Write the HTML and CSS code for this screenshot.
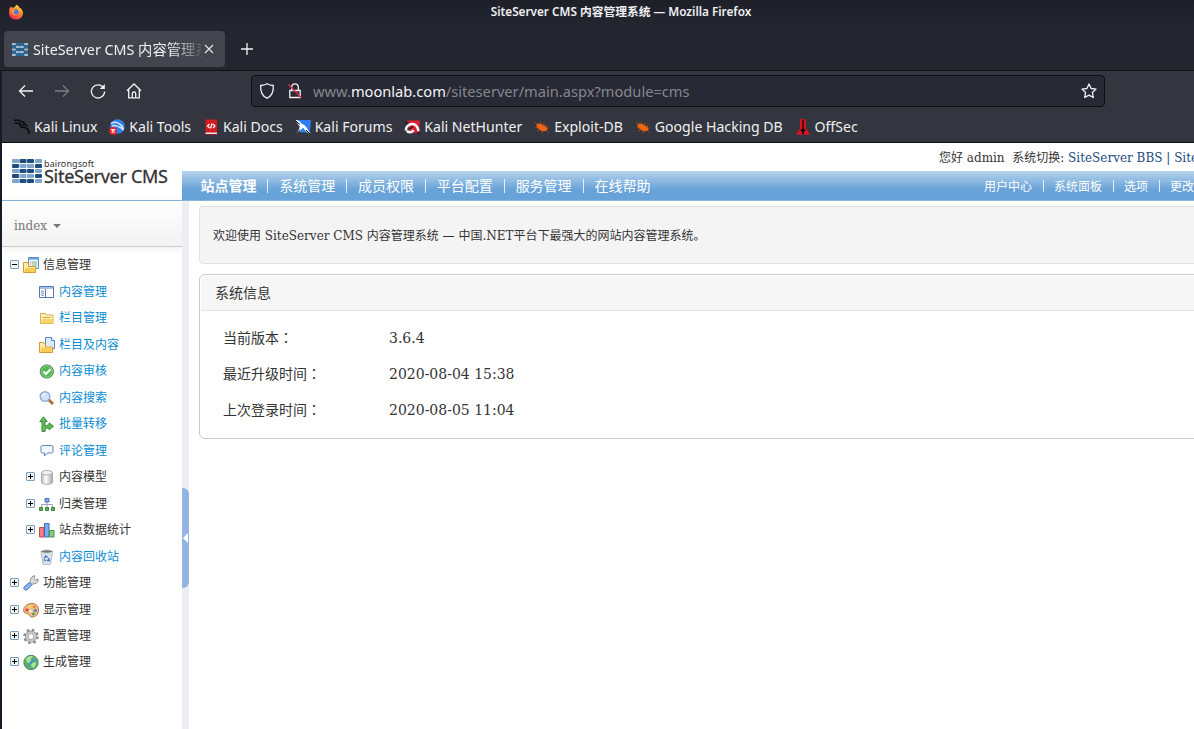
FILE: index.html
```html
<!DOCTYPE html>
<html lang="zh-CN">
<head>
  <meta charset="UTF-8" />
  <title>SiteServer CMS 内容管理系统</title>
  <link rel="stylesheet" href="styles.css">
</head>
<body>
  <div class="titlebar">
    <svg class="firefox" width="16" height="16" viewBox="0 0 16 16">
      <defs>
        <linearGradient id="fox" x1="0.8" y1="0" x2="0.3" y2="1">
          <stop offset="0" stop-color="#ffe14a"/><stop offset="0.45" stop-color="#ff8a2b"/><stop offset="1" stop-color="#f5245a"/>
        </linearGradient>
      </defs>
      <path d="M1.6 4.2 3 2.6l.8 1.2L6 3.6C7 2.8 8 2 8.200.8c1.600.4 2.600 1.400 3 2.600C13 4 15 6.200 15 9a7 6.600 0 0 1-14 0c0-1.800.2-3.200.6-4.800z" fill="url(#fox)"/>
      <circle cx="7.600" cy="8.200" r="3" fill="#4a74e8"/>
      <path d="M3.500 6.200c1.500-.6 3-.4 4 .6L5.500 8.300c0 2 2.500 2.500 4.500 1-.6 2.500-5.500 2.600-6.300-.2z" fill="#ff9a2e"/>
    </svg>
    <div class="window-title">SiteServer CMS 内容管理系统 — Mozilla Firefox</div>
  </div>

  <div class="tabs">
    <div class="tab">
      <svg width="16" height="13" viewBox="0 0 30 24">
        <path fill="#9dbfdf" d="M0 0h7v4H0zM23 0h7v4h-7zM7.500 5h7v4h-7zM15 5h7v4h-7zM0 10h7v4H0zM23 10h7v4h-7zM7.500 15h7v4h-7zM15 15h7v4h-7zM0 20h7v4H0zM23 20h7v4h-7z"/>
        <path fill="#1f6ca3" d="M7.500 0h7v4h-7zM15 0h7v4h-7zM0 5h7v4H0zM23 5h7v4h-7zM7.500 10h7v4h-7zM15 10h7v4h-7zM0 15h7v4H0zM23 15h7v4h-7zM7.500 20h7v4h-7zM15 20h7v4h-7z"/>
      </svg>
      <span class="tab-title">SiteServer CMS 内容管理系统</span>
      <svg class="close" width="10" height="10" viewBox="0 0 10 10"><path d="M1 1l8 8M9 1L1 9" stroke="#e6e6ea" stroke-width="1.1"/></svg>
    </div>
    <svg class="plus" width="14" height="14" viewBox="0 0 14 14"><path d="M7 1v12M1 7h12" stroke="#f2f2f4" stroke-width="1.3"/></svg>
  </div>

  <div class="window">
    <div class="toolbar">
      <div class="nav-buttons">
        <svg width="16" height="16" viewBox="0 0 16 16" class="stroke"><path d="M15 8H1.500M7 2.500 1.500 8 7 13.500"/></svg>
        <svg width="16" height="16" viewBox="0 0 16 16" class="stroke off"><path d="M1 8h13.500M9 2.500 14.500 8 9 13.500"/></svg>
        <svg width="16" height="16" viewBox="0 0 16 16" class="stroke"><path d="M13.500 4.800A6.600 6.600 0 1 0 14.600 8.500"/><path d="M14.800 1v5H9.800z" fill="#f2f2f4" stroke="none"/></svg>
        <svg width="16" height="16" viewBox="0 0 16 16" class="stroke"><path d="M1 7.800 8 1l7 6.800M2.700 6.500v8.300h10.600V6.500M6.300 14.800V10.500c0-2 3.400-2 3.400 0v4.300"/></svg>
      </div>
      <div class="urlbar">
        <svg width="16" height="16" viewBox="0 0 16 16" class="stroke"><path d="M8 .8c1.700 1 3.800 1.600 6.300 1.700C14.700 9 13 13 8 15.200 3 13 1.300 9 1.700 2.500 4.200 2.400 6.300 1.800 8 .8z"/></svg>
        <svg width="16" height="16" viewBox="0 0 16 16" class="stroke lock"><path d="M4.700 7V4.200a3.300 3.300 0 0 1 6.600 0V7M2.800 7.500h10.400v7H2.800z"/><path d="M1.500 1.500l13 13.500" stroke="#e22850" stroke-width="1.500"/></svg>
        <span class="url">www.<b>moonlab.com</b>/siteserver/main.aspx?module=cms</span>
        <svg width="16" height="16" viewBox="0 0 16 16" class="stroke star"><path d="M8 1l2.100 4.500 4.900.6-3.600 3.400.9 5L8 12.100l-4.300 2.400.9-5L1 6.100l4.900-.6z" stroke-linejoin="round"/></svg>
      </div>
    </div>

    <div class="bookmarks">
      <div class="bookmark">
        <svg width="16" height="16" viewBox="0 0 16 16"><path d="M0 1.500c3-1 5-.5 7 1 2 0 3 .8 4 2.200M1 4.500c3-.8 5-.2 6 1M5.500 4c0 3 2 4.500 5 4.600 2.500.3 4.400 2.500 4.800 6.400M8 5.500c2 0 4 0 5.500 1.500" fill="none" stroke="#08090b" stroke-width="1.500"/></svg>
        <span>Kali Linux</span>
      </div>
      <div class="bookmark">
        <svg width="16" height="16" viewBox="0 0 16 16"><circle cx="8.500" cy="7.500" r="7.300" fill="#2f7fee"/><path d="M2 4.500c4-2 7-1.500 9 1 2 .8 3 3 3.300 5.500C13 9 11 8 9 7.500M3 7c2-1 4-.5 5.500.5" fill="none" stroke="#d7e9ff" stroke-width="1.500"/><circle cx="4" cy="12" r="4" fill="#e4252c"/><path d="M2 10.500h4.200M3.300 10.500V14M5 10.500V14" stroke="#fff" fill="none"/></svg>
        <span>Kali Tools</span>
      </div>
      <div class="bookmark">
        <svg width="16" height="16" viewBox="0 0 16 16"><path d="M2.500.5H14v15H2.500z" fill="#d51920"/><path d="M2.500 13.500H14V15H2.500z" fill="#e9e3e3"/><path d="M6.500 5 4.500 7l2 2M10 5l2 2-2 2M9 4.500 7.500 9.500" stroke="#fff" fill="none" stroke-width="1.200"/></svg>
        <span>Kali Docs</span>
      </div>
      <div class="bookmark">
        <svg width="16" height="16" viewBox="0 0 16 16"><path d="M3 1h13l-1 12.500H5z" fill="#2c7ef0"/><path d="M0 1c4 0 5 2 7 4 4 1 5 5 9 10.500-3.500-1.500-6-4-8-7C6.500 11 4 12.500 1 14.500c2-3 3.500-5 4-7C2.500 5.500 2 3 0 1z" fill="#fff"/><path d="M0 1.500l5 4M11 11l4.500 4.500M1 14.500l4-4" stroke="#111" fill="none"/></svg>
        <span>Kali Forums</span>
      </div>
      <div class="bookmark">
        <svg width="16" height="16" viewBox="0 0 16 16"><path d="M3 1.500h13L15 14H6z" fill="#dd2234"/><path d="M2 11.500C1.500 7 6 4.500 9.500 5.200c3 .6 4.300 3 5 6.800" fill="none" stroke="#fff" stroke-width="2.400"/><path d="M3 11.500c1 2.500 5 2.500 6.500-.5" fill="none" stroke="#fff" stroke-width="2.400"/><path d="M1.200 4l3.500-.5M5.500 10 9 7.500M13 13.500l2.500 1.500" stroke="#191114" fill="none" stroke-width="1.200"/></svg>
        <span>Kali NetHunter</span>
      </div>
      <div class="bookmark bug">
        <svg width="16" height="16" viewBox="0 0 16 16"><path d="M2.500 5.500C4 3.500 7 4.500 10 6.500c2.500 1.200 4 3.200 3 4.800-2 1.700-5.500 1.200-8-1C3 9 2 7 2.500 5.500z" fill="#ef6511"/><path d="M1 3l2.500 2.500M6.500 2.500 7 5M10 3.500l0 3M13 5.500l-1 2.500M1.500 9l3-1M3 12.500l3-2M8 14.500V11M15 8.500l-2 1M15 13.500l-2-2" stroke="#b94e14" fill="none" stroke-width=".8"/></svg>
        <span>Exploit-DB</span>
      </div>
      <div class="bookmark bug">
        <svg width="16" height="16" viewBox="0 0 16 16"><path d="M2.500 5.500C4 3.500 7 4.500 10 6.500c2.500 1.200 4 3.200 3 4.800-2 1.700-5.500 1.200-8-1C3 9 2 7 2.500 5.500z" fill="#ef6511"/><path d="M1 3l2.500 2.500M6.500 2.500 7 5M10 3.500l0 3M13 5.500l-1 2.500M1.500 9l3-1M3 12.500l3-2M8 14.500V11M15 8.500l-2 1M15 13.500l-2-2" stroke="#b94e14" fill="none" stroke-width=".8"/></svg>
        <span>Google Hacking DB</span>
      </div>
      <div class="bookmark">
        <svg width="16" height="16" viewBox="0 0 16 16"><path d="M5 .3h6v9l4 6.400H1l4-6.400z" fill="#d8161f"/><path d="M7.300 1h1.400v8l2 2.500-1.700 1v2.500H7v-2.500l-1.700-1 2-2.500z" fill="#22090b"/></svg>
        <span>OffSec</span>
      </div>
    </div>

    <div class="page">
      <div class="header">
        <div class="logo">
          <svg width="30" height="25" viewBox="0 0 30 25">
            <g fill="#82a6cb"><rect x="0" y="0" width="7" height="4" rx="1"/><rect x="23" y="0" width="7" height="4" rx="1"/><rect x="7.500" y="5" width="7" height="4" rx="1"/><rect x="15" y="5" width="7" height="4" rx="1"/><rect x="0" y="10" width="7" height="4" rx="1"/><rect x="23" y="10" width="7" height="4" rx="1"/><rect x="7.500" y="15" width="7" height="4" rx="1"/><rect x="15" y="15" width="7" height="4" rx="1"/><rect x="0" y="20" width="7" height="4" rx="1"/><rect x="23" y="20" width="7" height="4" rx="1"/></g>
            <g fill="#1d4d7d"><rect x="7.500" y="0" width="7" height="4" rx="1"/><rect x="15" y="0" width="7" height="4" rx="1"/><rect x="0" y="5" width="7" height="4" rx="1"/><rect x="23" y="5" width="7" height="4" rx="1"/><rect x="7.500" y="10" width="7" height="4" rx="1"/><rect x="15" y="10" width="7" height="4" rx="1"/><rect x="0" y="15" width="7" height="4" rx="1"/><rect x="23" y="15" width="7" height="4" rx="1"/><rect x="7.500" y="20" width="7" height="4" rx="1"/><rect x="15" y="20" width="7" height="4" rx="1"/></g>
          </svg>
          <div class="logo-text">
            <span class="company">bairongsoft</span>
            <span class="product">SiteServer CMS</span>
          </div>
        </div>
        <div class="header-main">
          <div class="greeting">您好 admin&nbsp; 系统切换: <a>SiteServer BBS</a> <a>|</a> <a>SiteServer WCM</a></div>
          <div class="navbar">
            <ul class="menu">
              <li class="active">站点管理</li>
              <li>系统管理</li>
              <li>成员权限</li>
              <li>平台配置</li>
              <li>服务管理</li>
              <li>在线帮助</li>
            </ul>
            <ul class="menu user-menu">
              <li>用户中心</li>
              <li>系统面板</li>
              <li>选项</li>
              <li>更改密码</li>
            </ul>
          </div>
        </div>
      </div>

      <div class="main">
        <div class="sidebar">
          <div class="site-select">index <i class="caret"></i></div>
          <ul class="tree">
            <li>
              <i class="toggle minus"></i>
              <svg width="16" height="16" viewBox="0 0 16 16"><path d="M5.500.5h10v11h-10z" fill="#e9f3fd" stroke="#5b8fcf"/><path d="M5 1h11v1.500H5z" fill="#5d9ae0"/><path d="M7 5h1M7 7h1" stroke="#d79a3c"/><path d="M9 5h5M9 7h5M9 9h5" stroke="#86b886"/><path d="M.5 5.500h4l1 1.500v2.500h7v6H.5z" fill="#fdebb0" stroke="#d39b32"/><path d="M2.500 11h10l-.5 4H1z" fill="#f6cd55"/></svg>
              信息管理
            </li>
            <li class="child link">
              <svg width="16" height="16" viewBox="0 0 16 16"><path d="M.5 2.500h14v11H.5z" fill="#fff" stroke="#5478b4"/><path d="M1 3h13v2H1z" fill="#a8c1e8"/><path d="M6.500 5v8" stroke="#5478b4"/><path d="M3 6v6M3 7.500h2M3 9.500h2M3 11.500h2" stroke="#8fa2bb"/></svg>
              内容管理
            </li>
            <li class="child link">
              <svg width="16" height="16" viewBox="0 0 16 16"><path d="M1.500 3.500h5l1 1.500h6.500v8.500H1.500z" fill="#fdf0bd" stroke="#dfab4a"/><path d="M4 7.500h10v6H2z" fill="#f8d467"/><path d="M3.500 7.500h8" stroke="#d9a23a"/><path d="M3 8.500h10" stroke="#fff7d8"/></svg>
              栏目管理
            </li>
            <li class="child link">
              <svg width="16" height="16" viewBox="0 0 16 16"><path d="M6.500.5h6l3 3v8h-9z" fill="#dcebfb" stroke="#5b87c4"/><path d="M12.500.5v3h3" fill="#fff" stroke="#5b87c4"/><path d="M.5 5.500h4l1 1.500h1v3h7v5.500H.5z" fill="#fdebb0" stroke="#d39b32"/><path d="M2.500 10.500h10.800l-1 4.500H1z" fill="#f6cd55"/></svg>
              栏目及内容
            </li>
            <li class="child link">
              <svg width="16" height="16" viewBox="0 0 16 16"><circle cx="7.800" cy="8.500" r="6.600" fill="#58b558" stroke="#3f8a42"/><circle cx="7.800" cy="8.500" r="5.600" fill="none" stroke="#9ddb9a" stroke-width=".8"/><path d="M4.500 8.500 7 11l4.500-4.800" fill="none" stroke="#fff" stroke-width="2"/></svg>
              内容审核
            </li>
            <li class="child link">
              <svg width="16" height="16" viewBox="0 0 16 16"><path d="M9.500 9.500l4.500 4.500" stroke="#a8713c" stroke-width="3"/><circle cx="6" cy="6.500" r="4.800" fill="#cfe3fa" stroke="#91add6" stroke-width="1.400"/><path d="M3.500 6c.3-1.500 1.200-2.300 2.800-2.300" fill="none" stroke="#fff"/></svg>
              内容搜索
            </li>
            <li class="child link">
              <svg width="16" height="16" viewBox="0 0 16 16"><path d="M3 15.500V5.500H.8L4.500.8l3.700 4.700H6v5c.8-1 2-1.500 4-1.500V6.800l4.500 3.500-4.500 3.500v-2c-2.500 0-4 1-4 3.700z" fill="#62bd57" stroke="#3b8a3b"/></svg>
              批量转移
            </li>
            <li class="child link">
              <svg width="16" height="16" viewBox="0 0 16 16"><path d="M3.500 2.500h9a1.500 1.500 0 0 1 1.500 1.500v4.500a1.500 1.500 0 0 1-1.500 1.500H8.500L5.500 13v-3h-2A1.500 1.500 0 0 1 2 8.500V4a1.500 1.500 0 0 1 1.500-1.500z" fill="#f2f7fd" stroke="#5d86bb"/></svg>
              评论管理
            </li>
            <li class="sub">
              <i class="toggle"></i>
              <svg width="16" height="16" viewBox="0 0 16 16"><defs><linearGradient id="cyl"><stop offset="0" stop-color="#bbb"/><stop offset=".4" stop-color="#fff"/><stop offset="1" stop-color="#aaa"/></linearGradient></defs><path d="M2.500 3.500v9.500c0 3 11 3 11 0V3.500z" fill="url(#cyl)" stroke="#a7a7a7"/><ellipse cx="8" cy="3.700" rx="5.500" ry="2.200" fill="#f0f0f0" stroke="#b0b0b0"/></svg>
              内容模型
            </li>
            <li class="sub">
              <i class="toggle"></i>
              <svg width="16" height="16" viewBox="0 0 16 16"><path d="M8 6v3M2.500 12V8.500h11V12M8 9v3" fill="none" stroke="#9aa6b6"/><path d="M6 2.500h4v3.500H6z" fill="#7da9e6" stroke="#4d74b2"/><path d="M.5 11.500h3v3h-3zM6.500 11.500h3v3h-3zM12.500 11.500h3v3h-3z" fill="#67b155" stroke="#3b8335"/></svg>
              归类管理
            </li>
            <li class="sub">
              <i class="toggle"></i>
              <svg width="16" height="16" viewBox="0 0 16 16"><path d="M.5 5.500h4.500v9.500H.5z" fill="#f08080" stroke="#c64747"/><path d="M5.500 1.500H10V15H5.500z" fill="#80abea" stroke="#396eba"/><path d="M10.500 8.500H15V15h-4.500z" fill="#8bc982" stroke="#49934a"/></svg>
              站点数据统计
            </li>
            <li class="child link">
              <svg width="16" height="16" viewBox="0 0 16 16"><path d="M2 2.500l2 12.500c2 1 5.500 1 7.500 0L13.500 2.500z" fill="#dfe4ea" stroke="#b2b9c2"/><ellipse cx="7.800" cy="2.500" rx="6" ry="1.700" fill="#6d7783" stroke="#dde1e6"/><path d="M5.200 9.500l1.500-2.500 2 1.500M9.500 9l.8 2.500H7.800M6.500 12l-1.500-1.500" fill="none" stroke="#376fc0" stroke-width="1.300"/></svg>
              内容回收站
            </li>
            <li>
              <i class="toggle"></i>
              <svg width="16" height="16" viewBox="0 0 16 16"><path d="M7.500 6.500c-.5-3 1.500-5.700 4.500-5.700L11 3.300l1.600 1.800L15 4c.8 3-2 5.400-5 4.600L8.800 9.800 6.500 7.500z" fill="#dcdcdc" stroke="#8d8d8d"/><path d="M6.600 7.200l2.500 2.500-5 5c-2 1.200-4-.6-3-2.700z" fill="#8fb3f0" stroke="#4c72b9"/></svg>
              功能管理
            </li>
            <li>
              <i class="toggle"></i>
              <svg width="16" height="16" viewBox="0 0 16 16"><path d="M.6 8.500C.6 4 5 1.500 9 1.500c4 0 6.500 2.500 6.500 6.500 0 4.500-3 7-6.500 7-2.500 0-2-2.500-4-3.200C3 11.500.8 11 .6 8.500z" fill="#efbd88" stroke="#b0753f"/><circle cx="4" cy="8" r="1.500" fill="#d93a32"/><circle cx="7" cy="4.800" r="1.400" fill="#f4d842"/><circle cx="11.300" cy="5" r="1.400" fill="#e6803a"/><circle cx="12.300" cy="8.500" r="1.500" fill="#3d82d6"/><circle cx="10.500" cy="12" r="1.400" fill="#4aa05a"/><circle cx="7.500" cy="9" r="1.200" fill="#fff"/></svg>
              显示管理
            </li>
            <li>
              <i class="toggle"></i>
              <svg width="16" height="16" viewBox="0 0 16 16"><circle cx="8" cy="8.500" r="6.500" fill="none" stroke="#8f8f8f" stroke-width="2.600" stroke-dasharray="2.550 2.555"/><circle cx="8" cy="8.500" r="4.200" fill="#fff" stroke="#8f8f8f" stroke-width="3.400"/><circle cx="8" cy="8.500" r="4.200" fill="none" stroke="#c8c8c8" stroke-width="2.200"/></svg>
              配置管理
            </li>
            <li>
              <i class="toggle"></i>
              <svg width="16" height="16" viewBox="0 0 16 16"><circle cx="8" cy="8.500" r="7.200" fill="#5fae69" stroke="#4b8d55"/><path d="M3 5c2-3 5-3.500 7-2.500L7.500 5.500 9 7 5.500 9 4 8zM8.500 9.500 12.500 8c1 2 0 4.500-2 6L8 12z" fill="#a6e49b"/><path d="M9 5c2 0 3 1 3 2.500L9.500 8 8 10.500 6 9.500zM4 10.500l2.500 1 .5 2.500c-1.500-.5-2.500-1.500-3-3.500z" fill="#4a92d8"/></svg>
              生成管理
            </li>
          </ul>
        </div>
        <div class="splitter"><div class="handle"></div></div>
        <div class="content">
          <div class="welcome">欢迎使用 SiteServer CMS 内容管理系统 — 中国.NET平台下最强大的网站内容管理系统。</div>
          <div class="panel">
            <div class="panel-title">系统信息</div>
            <dl class="info">
              <dt>当前版本<span class="colon" lang="zh-TW">：</span></dt><dd>3.6.4</dd>
              <dt>最近升级时间<span class="colon" lang="zh-TW">：</span></dt><dd>2020-08-04 15:38</dd>
              <dt>上次登录时间<span class="colon" lang="zh-TW">：</span></dt><dd>2020-08-05 11:04</dd>
            </dl>
          </div>
        </div>
      </div>
    </div>
  </div>
</body>
</html>
```
FILE: styles.css
```css
* { box-sizing: border-box; }
body {
  margin: 0;
  width: 1194px;
  height: 729px;
  overflow: hidden;
  display: flex;
  flex-direction: column;
  background: #23262f;
  color: #f0f0f2;
  font-family: "Noto Sans", "Noto Sans CJK SC", sans-serif;
  white-space: nowrap;
}
ul, dl, dd { margin: 0; padding: 0; list-style: none; }
svg { flex: none; display: block; }

/* browser window */
.titlebar {
  height: 25px;
  display: flex;
  align-items: center;
  background: linear-gradient(#1e1f29, #23262f);
}
.firefox { margin: 0 0 2px 8px; }
.window-title {
  flex: 1;
  padding: 0 0 3px 24px;
  text-align: center;
  font-size: 11.75px;
  font-weight: 600;
  line-height: 22px;
}
.tabs {
  height: 45px;
  padding: 6px 0 3px 4px;
  display: flex;
  align-items: center;
}
.tab {
  width: 221px;
  height: 36px;
  padding: 0 11px 0 8px;
  display: flex;
  align-items: center;
  background: #42454d;
  border-radius: 4px;
}
.tab-title {
  width: 168px;
  margin-left: 5px;
  padding-bottom: 2px;
  overflow: hidden;
  font-size: 14.3px;
  -webkit-mask-image: linear-gradient(to right, #000 138px, transparent 172px);
  mask-image: linear-gradient(to right, #000 138px, transparent 172px);
}
.close { margin-left: 3px; }
.plus { margin-left: 15px; }
.window {
  flex: 1;
  display: flex;
  flex-direction: column;
  border-left: 2px solid #171a27;
  border-top: 1px solid #101116;
  background: #33363e;
}
.toolbar {
  height: 41px;
  display: flex;
  align-items: center;
  padding: 0 0 1px 16px;
}
.nav-buttons {
  width: 233px;
  display: flex;
  gap: 20px;
}
.stroke {
  fill: none;
  stroke: #f2f2f4;
  stroke-width: 1.3;
}
.off { stroke: #7b7d83; }
.urlbar {
  width: 854px;
  height: 32px;
  padding: 0 7px;
  display: flex;
  align-items: center;
  background: #272934;
  border: 1px solid #0e0f13;
  border-radius: 4px;
}
.lock { margin-left: 12px; }
.url {
  margin-left: 10px;
  flex: 1;
  color: #85878e;
  font-size: 14.65px;
}
.url b { font-weight: normal; color: #f5f5f7; }
.bookmarks {
  height: 31px;
  padding: 0 0 1px 12px;
  display: flex;
  align-items: center;
  gap: 11.8px;
  border-bottom: 1px solid #0e0f13;
  font-size: 14.1px;
}
.bookmark {
  display: flex;
  align-items: center;
  gap: 4px;
}
.bookmark span { padding-bottom: 1px; }

/* cms page */
.page {
  flex: 1;
  display: flex;
  flex-direction: column;
  overflow: hidden;
  background: #fff;
  color: #333;
  font-family: "DejaVu Serif", "Noto Sans CJK SC", serif;
  font-size: 12px;
}
.header {
  height: 58px;
  display: flex;
  border-bottom: 1px solid #8cb4da;
}
.logo {
  width: 180px;
  padding: 16px 0 0 10px;
  display: flex;
  gap: 2px;
  font-family: "Noto Sans", sans-serif;
}
.logo-text {
  display: flex;
  flex-direction: column;
}
.company { font-size: 9px; line-height: 9px; letter-spacing: .1px; }
.product { font-size: 18px; line-height: 17px; letter-spacing: -.28px; -webkit-text-stroke: .3px #333; }
.header-main {
  flex: 1;
  min-width: 0;
}
.greeting {
  height: 28px;
  padding: 1px 0 0 757px;
  line-height: 28px;
}
.greeting a { color: #1c4c81; }
.navbar {
  height: 29px;
  display: flex;
  background: linear-gradient(#b6d3ec, #67a2d8 65%);
  color: #fff;
  padding: 0 0 2px 18.5px;
}
.menu {
  width: 783.5px;
  flex: none;
  display: flex;
  align-items: center;
  font-size: 14px;
}
.menu li { display: flex; align-items: center; }
.menu li + li::before {
  content: "";
  width: 1px;
  height: 14px;
  margin: 2px 10.900px 0;
  background: #e4effa;
}
.active { font-weight: bold; }
.user-menu { font-size: 12px; padding-top: 1px; }
.user-menu li + li::before { height: 12px; margin: 1px 10.500px 0; }
.main {
  flex: 1;
  display: flex;
}
.sidebar { width: 180px; flex: none; }
.site-select {
  height: 46px;
  padding: 4px 0 0 12px;
  display: flex;
  align-items: center;
  gap: 6px;
  background: linear-gradient(#fff, #f2f2f2);
  border-bottom: 1px solid #ccc;
  box-shadow: 0 1px 8px rgba(0, 0, 0, .08);
  color: #777;
}
.caret {
  border: 4px solid transparent;
  border-top-color: #777;
  border-bottom: 0;
}
.tree { padding-top: 3.7px; }
.tree li {
  height: 26.47px;
  padding-left: 8px;
  display: flex;
  align-items: center;
}
.tree svg { margin: 3px 4px 0 0; }
.tree .sub { padding-left: 24px; }
.tree .child { padding-left: 37px; }
.tree .link { color: #0a8cd2; }
.toggle {
  width: 9px;
  height: 9px;
  margin: 2px 4px 0 0;
  border: 1px solid #7b9ebd;
  border-radius: 1px;
  background:
    linear-gradient(#000, #000) center / 5px 1px no-repeat,
    linear-gradient(#000, #000) center / 1px 5px no-repeat,
    #f5f5f2;
}
.minus { background: linear-gradient(#000, #000) center / 5px 1px no-repeat, #f5f5f2; }
.splitter {
  width: 7px;
  flex: none;
  display: flex;
  background: #ebeff3;
  padding-top: 287px;
}
.handle {
  width: 7px;
  height: 100px;
  padding-top: 45px;
  background: #94b4e3;
  border-radius: 0 6px 6px 0;
}
.handle::after {
  content: "";
  display: block;
  width: 0;
  margin-left: 1px;
  border: 5px solid transparent;
  border-right-color: #fff;
  border-left: 0;
}
.content {
  flex: 1;
  min-width: 0;
  padding: 5px 0 0 10px;
}
.welcome {
  width: 1100px;
  height: 58px;
  padding-left: 13px;
  line-height: 58px;
  background: #f4f4f4;
  border: 1px solid #e2e2e2;
  border-radius: 4px;
}
.panel {
  width: 1100px;
  height: 165px;
  margin-top: 10px;
  padding: 1px;
  border: 1px solid #c8c8c8;
  border-radius: 6px;
  font-size: 14px;
}
.panel-title {
  height: 35px;
  padding-left: 14px;
  line-height: 34px;
  background: #f6f6f6;
  border-bottom: 1px solid #e5e5e5;
  border-radius: 5px 5px 0 0;
}
.info {
  display: grid;
  grid-template-columns: 166px 1fr;
  padding: 9px 0 0 22px;
  line-height: 36px;
}
/* the full-width colon sits in the middle of its box */
.colon { font-family: "Noto Sans CJK TC", sans-serif; line-height: 1; }
```
